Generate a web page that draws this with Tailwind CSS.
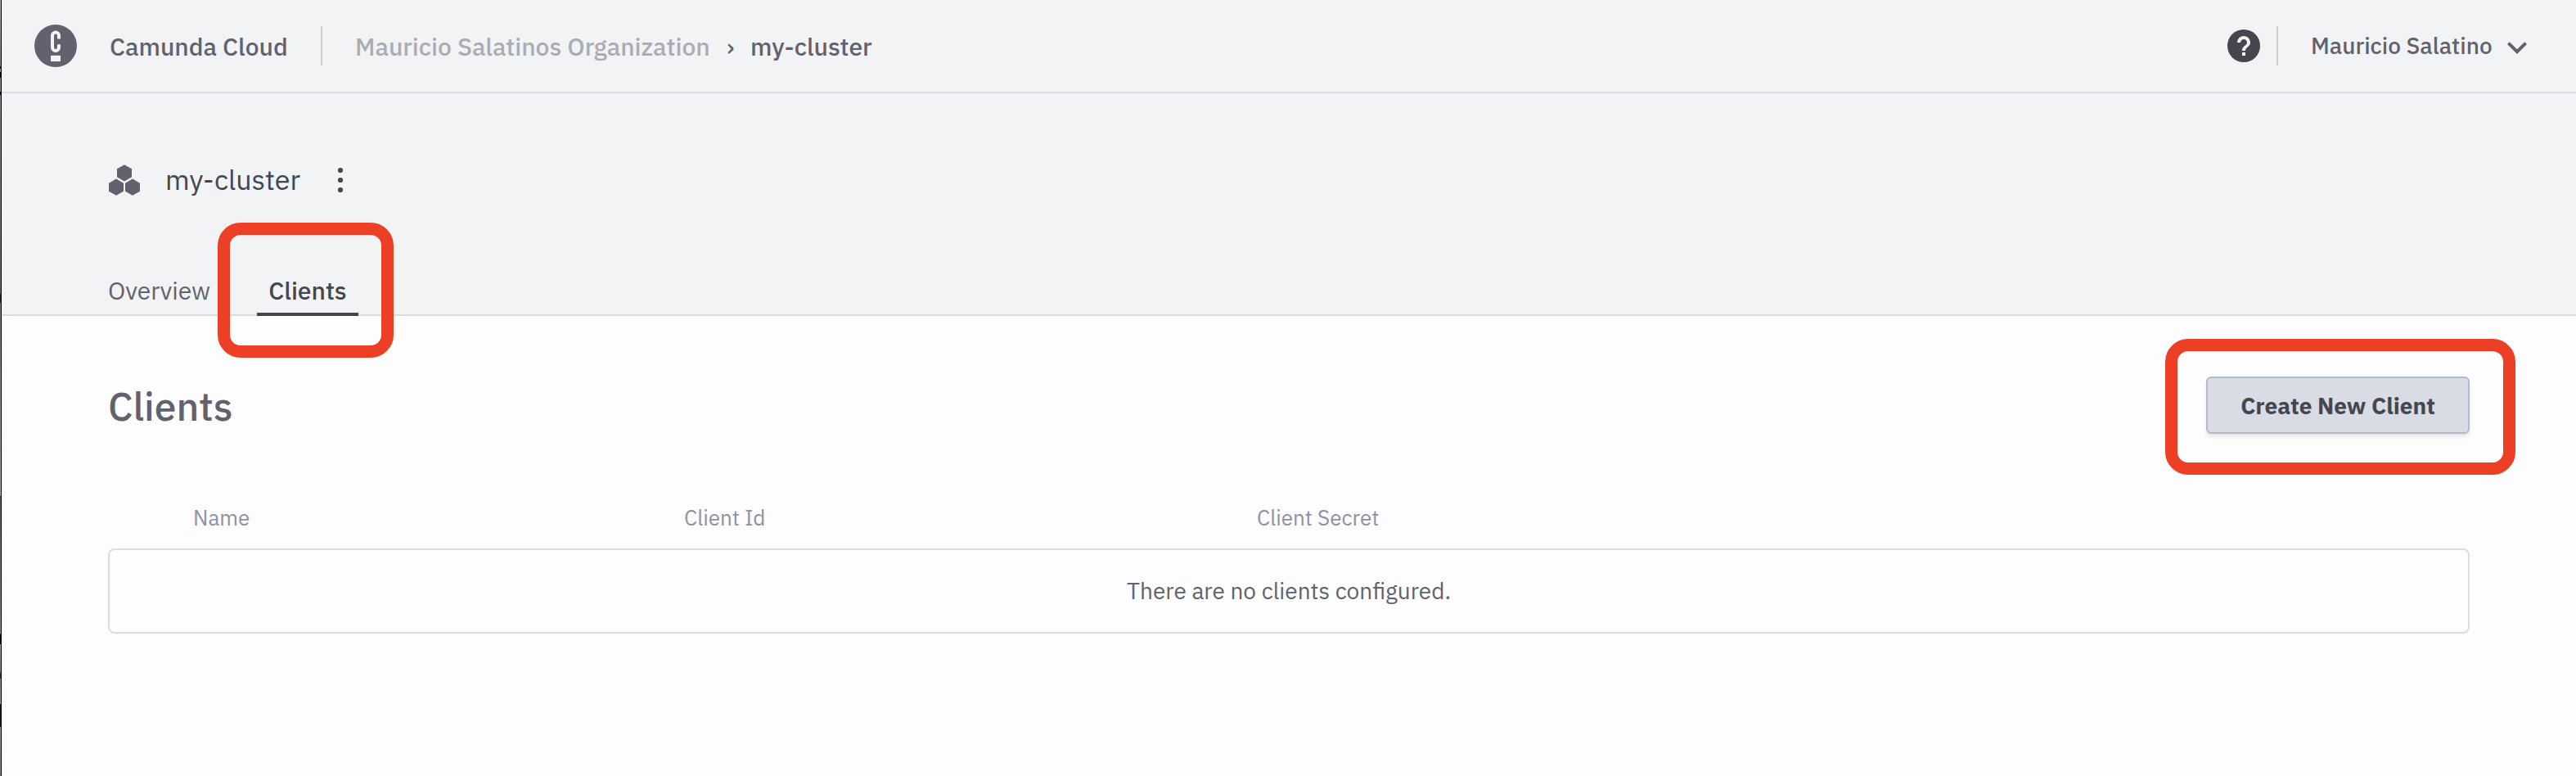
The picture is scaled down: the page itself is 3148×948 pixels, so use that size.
<!DOCTYPE html>
<html lang="en">
<head>
<meta charset="utf-8">
<title>Camunda Cloud</title>
<script src="https://cdn.jsdelivr.net/npm/@tailwindcss/browser@4"></script>
</head>
<body class="relative flex h-[948px] w-[3148px] overflow-hidden bg-[#fdfdfd] font-['IBM_Plex_Sans','Roboto',sans-serif] text-[#62626e]">

<!-- window edge -->
<div class="flex w-[2px] shrink-0">
  <div class="w-px bg-[linear-gradient(to_bottom,#b0b2b6_0px,#85868a_81px,#111_81px,#111_84px,#99999c_84px,#99999c_88px,#0a0a0c_88px,#0a0a0c_95px,#8d8e92_95px,#8d8e92_112px,#111216_112px,#111216_116px,#8b8c90_116px,#66676b_359px,#26272f_359px,#26272f_370px,#77787c_370px,#a9abae_606px,#000_606px,#000_607px,#5d5e60_607px,#8e8f91_774px,#050505_775px,#050505_787px,#a0a1a4_787px,#88898c_820px,#333_823px,#333_829px,#8b8c8e_829px,#9b9c9e_860px,#1c1c1e_860px,#1c1c1e_888px,#9b9c9e_888px,#88898b_948px)]"></div>
  <div class="w-px bg-black"></div>
</div>

<div class="flex min-w-0 flex-1 flex-col">
  <header class="flex h-[114px] shrink-0 items-center justify-between border-b-2 border-[#d9dce4] bg-[#f2f3f5] pl-10 pr-12 font-medium">
    <div class="flex items-center text-[30px] leading-[40px]">
      <svg class="size-[52px] shrink-0" viewBox="0 0 52 52" fill="none">
        <circle cx="26" cy="26" r="26" fill="#62626e"/>
        <path d="M30 17.5V13.4a4 4 0 0 0-8 0V28.1a4 4 0 0 0 8 0V24.2" stroke="#f2f3f5" stroke-width="4"/>
        <path d="M20 37.8h12v7.2H20z" fill="#f2f3f5"/>
      </svg>
      <span class="ml-10 w-[218px] whitespace-nowrap pt-[2px]">Camunda Cloud</span>
      <span class="ml-10 h-12 w-[2px] bg-[#cdced2]"></span>
      <span class="ml-10 w-[434px] whitespace-nowrap pt-[2px] text-[#abacb3]">Mauricio Salatinos Organization</span>
      <span class="ml-5 w-[9px] pt-[2px]">›</span>
      <span class="ml-5 whitespace-nowrap pt-[2px]">my-cluster</span>
    </div>
    <div class="flex items-center text-[28px] leading-[40px]">
      <svg class="size-12" viewBox="0 0 24 24">
        <circle cx="12" cy="12" r="10" fill="#45464e"/>
        <path fill="#f2f3f5" d="M11 18h2v-2h-2v2zm1-12c-2.21 0-4 1.79-4 4h2c0-1.1.9-2 2-2s2 .9 2 2c0 2-3 1.75-3 5h2c0-2.25 3-2.5 3-5 0-2.21-1.79-4-4-4z"/>
      </svg>
      <span class="ml-4 h-12 w-[2px] bg-[#cdced2]"></span>
      <span class="ml-10 w-[222px] whitespace-nowrap">Mauricio Salatino</span>
      <svg class="ml-[6px] mt-1 size-12" viewBox="0 0 24 24" fill="#62626e"><path d="M16.59 8.59L12 13.17 7.41 8.59 6 10l6 6 6-6z"/></svg>
    </div>
  </header>

  <section class="flex h-[272px] shrink-0 flex-col justify-between border-b-2 border-[#d9dce4] bg-[#f2f3f5] pl-[130px] pt-[82px]">
    <div class="flex h-12 items-center text-[#45464e]">
      <svg class="ml-px size-[38px]" viewBox="0 0 38 38" fill="#62626e">
        <path d="M19 .2l9 5.1v10L19 20.4l-9-5.1v-10z"/>
        <path d="M9 17.6l9 5.1v10L9 37.8l-9-5.1v-10z"/>
        <path d="M29 17.6l9 5.1v10l-9 5.1-9-5.1v-10z"/>
      </svg>
      <span class="ml-[31px] w-[165px] whitespace-nowrap pb-[2px] text-[34px] leading-[46px]">my-cluster</span>
      <svg class="ml-[43px] h-8 w-3" viewBox="0 0 12 32" fill="#45464e"><circle cx="6" cy="4" r="3.1"/><circle cx="6" cy="16" r="3.1"/><circle cx="6" cy="28" r="3.1"/></svg>
    </div>
    <nav class="-mb-[2px] flex h-[51px] text-[30px] leading-[40px]">
      <a class="w-[125px] whitespace-nowrap">Overview</a>
      <a class="ml-[57px] w-[124px] border-b-4 border-[#45464e] text-center font-medium text-[#45464e]">Clients</a>
    </nav>
  </section>

  <main class="flex flex-col pl-[130px] pr-[130px] pt-[74px]">
    <div class="flex h-[70px] items-center justify-between">
      <h1 class="pt-[2px] text-[48px] font-medium leading-[60px]">Clients</h1>
      <button class="h-[70px] w-[322px] rounded-md border-2 border-[#b0bac9] bg-[#d9dce4] pt-[2px] text-[28px] font-bold leading-[40px] text-[#45464e] shadow-[0_4px_4px_rgba(0,0,0,0.08)]">Create New Client</button>
    </div>
    <div class="mt-[82px] grid grid-cols-[600px_700px_1fr] pl-[104px] text-[26px] leading-[40px] text-[#9091a2]">
      <span>Name</span><span>Client Id</span><span>Client Secret</span>
    </div>
    <div class="mt-[18px] flex h-[104px] items-center justify-center rounded-lg border-2 border-[#d9dce4] text-[28px] leading-[40px]">There are no clients configured.</div>
  </main>
</div>

<!-- callout frames -->
<div class="absolute left-[266px] top-[272px] h-[165px] w-[215px] rounded-[28px] border-[15px] border-[#ec3f26]"></div>
<div class="absolute left-[2646px] top-[414px] h-[166px] w-[428px] rounded-[28px] border-[15px] border-[#ec3f26]"></div>
</body>
</html>
